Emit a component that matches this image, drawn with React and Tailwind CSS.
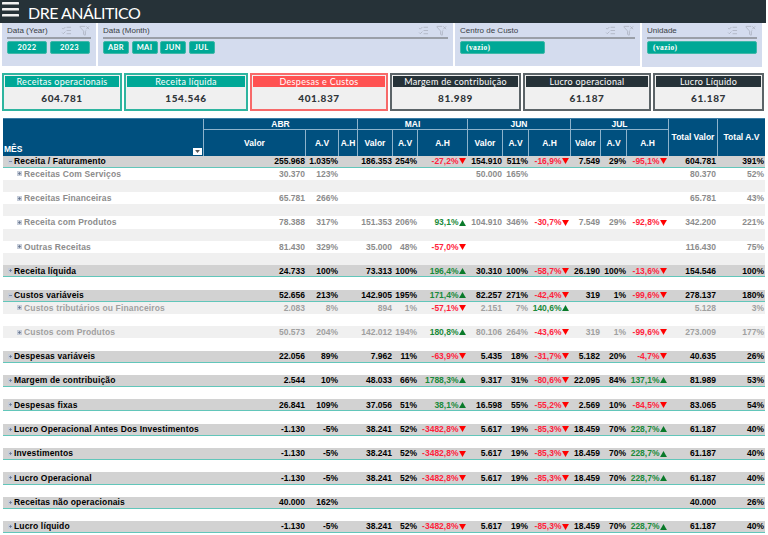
import React from 'react'
import { ListChecks, FilterX } from "lucide-react";

const grid = "grid grid-cols-[201px_102px_33px_19px_35px_25px_50px_35px_26px_42px_30px_26px_42px_49px_47px]";

// main = bold gray band with teal rule, sub = gray text detail row
const rows = [
  { label: "Receita / Faturamento", kind: "main", open: true, v: ["255.968", "1.035%", "", "186.353", "254%", "-27,2%", "154.910", "511%", "-16,9%", "7.549", "29%", "-95,1%", "604.781", "391%"] },
  { label: "Receitas Com Serviços", kind: "sub", v: ["30.370", "123%", "", "", "", "", "50.000", "165%", "", "", "", "", "80.370", "52%"] },
  { kind: "band" },
  { label: "Receitas Financeiras", kind: "sub", v: ["65.781", "266%", "", "", "", "", "", "", "", "", "", "", "65.781", "43%"] },
  { kind: "band" },
  { label: "Receita com Produtos", kind: "sub", v: ["78.388", "317%", "", "151.353", "206%", "93,1%", "104.910", "346%", "-30,7%", "7.549", "29%", "-92,8%", "342.200", "221%"] },
  { kind: "band" },
  { label: "Outras Receitas", kind: "sub", v: ["81.430", "329%", "", "35.000", "48%", "-57,0%", "", "", "", "", "", "", "116.430", "75%"] },
  { kind: "band" },
  { label: "Receita líquida", kind: "main", v: ["24.733", "100%", "", "73.313", "100%", "196,4%", "30.310", "100%", "-58,7%", "26.190", "100%", "-13,6%", "154.546", "100%"] },
  { kind: "blank" },
  { label: "Custos variáveis", kind: "main", open: true, v: ["52.656", "213%", "", "142.905", "195%", "171,4%", "82.257", "271%", "-42,4%", "319", "1%", "-99,6%", "278.137", "180%"] },
  { label: "Custos tributários ou Financeiros", kind: "subgray", v: ["2.083", "8%", "", "894", "1%", "-57,1%", "2.151", "7%", "140,6%", "", "", "", "5.128", "3%"] },
  { kind: "blank" },
  { label: "Custos com Produtos", kind: "subgray", v: ["50.573", "204%", "", "142.012", "194%", "180,8%", "80.106", "264%", "-43,6%", "319", "1%", "-99,6%", "273.009", "177%"] },
  { kind: "blank" },
  { label: "Despesas variáveis", kind: "main", v: ["22.056", "89%", "", "7.962", "11%", "-63,9%", "5.435", "18%", "-31,7%", "5.182", "20%", "-4,7%", "40.635", "26%"] },
  { kind: "blank" },
  { label: "Margem de contribuição", kind: "main", v: ["2.544", "10%", "", "48.033", "66%", "1788,3%", "9.317", "31%", "-80,6%", "22.095", "84%", "137,1%", "81.989", "53%"] },
  { kind: "blank" },
  { label: "Despesas fixas", kind: "main", v: ["26.841", "109%", "", "37.056", "51%", "38,1%", "16.598", "55%", "-55,2%", "2.569", "10%", "-84,5%", "83.065", "54%"] },
  { kind: "blank" },
  { label: "Lucro Operacional Antes Dos Investimentos", kind: "main", v: ["-1.130", "-5%", "", "38.241", "52%", "-3482,8%", "5.617", "19%", "-85,3%", "18.459", "70%", "228,7%", "61.187", "40%"] },
  { kind: "blank" },
  { label: "Investimentos", kind: "main", v: ["-1.130", "-5%", "", "38.241", "52%", "-3482,8%", "5.617", "19%", "-85,3%", "18.459", "70%", "228,7%", "61.187", "40%"] },
  { kind: "blank" },
  { label: "Lucro Operacional", kind: "main", v: ["-1.130", "-5%", "", "38.241", "52%", "-3482,8%", "5.617", "19%", "-85,3%", "18.459", "70%", "228,7%", "61.187", "40%"] },
  { kind: "blank" },
  { label: "Receitas não operacionais", kind: "main", v: ["40.000", "162%", "", "", "", "", "", "", "", "", "", "", "40.000", "26%"] },
  { kind: "blank" },
  { label: "Lucro líquido", kind: "main", v: ["-1.130", "-5%", "", "38.241", "52%", "-3482,8%", "5.617", "19%", "-85,3%", "18.459", "70%", "228,7%", "61.187", "40%"] },
];

const cards = [
  { title: "Receitas operacionais", value: "604.781", w: "w-[120px]", box: "border-[#2fb5a0]", head: "bg-[#00a896]" },
  { title: "Receita líquida", value: "154.546", w: "w-[124px]", box: "border-[#2fb5a0]", head: "bg-[#00a896]" },
  { title: "Despesas e Custos", value: "401.837", w: "w-[138px]", box: "border-[#f76a6a]", head: "bg-[#ff5252]" },
  { title: "Margem de contribuição", value: "81.989", w: "w-[131px]", box: "border-[#5c6468]", head: "bg-[#263238]" },
  { title: "Lucro operacional", value: "61.187", w: "w-[128px]", box: "border-[#5c6468]", head: "bg-[#263238]" },
  { title: "Lucro Líquido", value: "61.187", w: "w-[111px]", box: "border-[#5c6468]", head: "bg-[#263238]" },
];

function Slicer({ title, className, children }) {
  return (
    <div className={"bg-[#d4dcee] px-[5px] pt-[2px] " + className}>
      <div className="flex items-center justify-between border-b-2 border-[#9a9fa8] pb-[1px] h-[14px] text-[8px] text-[#3a3f47]">
        <span>{title}</span>
        <span className="flex items-center gap-[7px] mr-[1px] text-[#a4abb8]">
          <ListChecks className="w-[11px] h-[11px]" strokeWidth={1.5} />
          <FilterX className="w-[11px] h-[11px]" strokeWidth={1.5} />
        </span>
      </div>
      <div className="flex gap-[2.5px] mt-[2px]">{children}</div>
    </div>
  );
}

function Chip({ children, className }) {
  return (
    <div className={"h-[13px] bg-[#00a896] rounded-[2px] border border-[#3fb8a8] text-white text-[7.5px] font-bold flex items-center justify-center font-['Lato',sans-serif] tracking-[0.4px] " + className}>
      {children}
    </div>
  );
}

function Ah({ value }) {
  const down = value.startsWith("-");
  return (
    <span className={"flex items-center justify-end pr-[2px] gap-[0.5px] font-bold " + (down ? "text-[#ff1f3d]" : "text-[#1a8a3a]")}>
      {value}
      <svg viewBox="0 0 8 7" className="w-[7px] h-[6px] shrink-0">
        <path d={down ? "M0 0H8L4 7Z" : "M4 0L8 7H0Z"} fill={down ? "#ff0000" : "#0a7a2a"} />
      </svg>
    </span>
  );
}

function ExpandBox({ open }) {
  return (
    <svg viewBox="0 0 5 5" className="w-[5px] h-[5px] shrink-0">
      <rect x="0" y="0" width="5" height="5" fill="#c6cdd9" />
      <path d="M1 2.5H4" stroke="#5f6f8a" strokeWidth="0.7" />
      {!open && <path d="M2.5 1V4" stroke="#5f6f8a" strokeWidth="0.7" />}
    </svg>
  );
}

function Row({ r }) {
  if (r.kind === "band") return <div className="h-[12.2px] bg-[#f0f0f0]" />;
  if (r.kind === "blank") return <div className="h-[12.2px] bg-white" />;
  const main = r.kind === "main";
  const style = main
    ? "bg-[#d2d2d2] border-b border-[#62c6ba] text-black font-bold"
    : r.kind === "subgray"
      ? "bg-[#f0f0f0] text-[#a0a0a0] font-bold"
      : "bg-white text-[#8c8c8c] font-bold";
  return (
    <div className={grid + " h-[12.2px] items-center text-[8.5px] leading-none " + style}>
      <div className={"flex items-center " + (main ? "pl-[5px] gap-[1px]" : "pl-[14px] gap-[2px]")}>
        <ExpandBox open={r.open} />
        <span className="tracking-[0.15px] whitespace-nowrap">{r.label}</span>
      </div>
      {r.v.map((c, i) => {
        const isAh = i === 2 || i === 5 || i === 8 || i === 11;
        if (isAh) return <div key={i}>{c && <Ah value={c} />}</div>;
        return (
          <div key={i} className={"text-right whitespace-nowrap " + (i === 12 ? "pr-[2px]" : "pr-[1px]")}>
            {c}
          </div>
        );
      })}
    </div>
  );
}

export default function App() {
  return (
    <div className="w-[768px] h-[535px] overflow-hidden bg-white font-['Liberation_Sans',Arial,sans-serif]">
      {/* Top bar */}
      <div className="w-[766px] h-[23px] bg-[#263238] flex items-end text-white">
        <svg viewBox="0 0 17 15" className="w-[17px] h-[15px] ml-[2px] self-start mt-[2px] shrink-0" fill="#f2f2f2">
          <rect x="0" y="0" width="17" height="2.6" rx="0.6" />
          <rect x="0" y="6" width="17" height="2.6" rx="0.6" />
          <rect x="0" y="12" width="17" height="2.6" rx="0.6" />
        </svg>
        <span className="ml-[9px] text-[16px] leading-[20px] tracking-[-0.5px] font-['Lato',sans-serif]">DRE ANÁLITICO</span>
      </div>

      {/* Slicers */}
      <div className="flex items-start pl-[2px] gap-[2px] h-[44px]">
        <Slicer title="Data (Year)" className="w-[94px] h-[43px]">
          <Chip className="w-[40px]">2022</Chip>
          <Chip className="w-[40px]">2023</Chip>
        </Slicer>
        <Slicer title="Data (Month)" className="w-[355px] h-[43px]">
          <Chip className="w-[26px]">ABR</Chip>
          <Chip className="w-[26px]">MAI</Chip>
          <Chip className="w-[26px]">JUN</Chip>
          <Chip className="w-[26px]">JUL</Chip>
        </Slicer>
        <Slicer title="Centro de Custo" className="w-[185px] h-[43px]">
          <Chip className="w-[85px] !justify-start pl-[5px] font-['Liberation_Serif',serif]">(vazio)</Chip>
        </Slicer>
        <Slicer title="Unidade" className="w-[120px] h-[44px]">
          <Chip className="w-[110px] !justify-start pl-[5px] font-['Liberation_Serif',serif]">(vazio)</Chip>
        </Slicer>
      </div>

      {/* KPI cards */}
      <div className="flex pl-[2px] gap-[2px] mt-[6px] h-[38px] font-['Lato',sans-serif]">
        {cards.map((c) => (
          <div key={c.title} className={"bg-[#f0f0f0] border-2 flex flex-col " + c.w + " " + c.box}>
            <div className={"h-[11px] mx-[1px] mt-[1px] text-white text-[9px] leading-[11px] text-center tracking-[0.3px] whitespace-nowrap " + c.head}>
              {c.title}
            </div>
            <div className="flex-1 flex items-center justify-center text-[10px] font-black text-[#30363a] tracking-[0.6px]">
              {c.value}
            </div>
          </div>
        ))}
      </div>

      {/* Table */}
      <div className="ml-[3px] mt-[7px] w-[762px]">
        <div className="bg-[#00507f] text-white font-bold text-[8.5px] h-[37.5px] border-t border-[#3a7ca5]">
          <div className={grid + " h-[36.5px] text-center"}>
            <div className="row-span-2 border-r border-[#8db3cc] flex items-end justify-between pl-[1px]">
              <span>MÊS</span>
              <span className="w-[9px] h-[7px] mr-[1px] mb-[1px] bg-white flex items-center justify-center">
                <svg viewBox="0 0 8 5" className="w-[5px] h-[3px]"><path d="M0 0H8L4 5Z" fill="#555" /></svg>
              </span>
            </div>
            <div className="col-span-3 h-[11px] leading-[11px] border-r border-b border-[#8db3cc]">ABR</div>
            <div className="col-span-3 h-[11px] leading-[11px] border-r border-b border-[#8db3cc]">MAI</div>
            <div className="col-span-3 h-[11px] leading-[11px] border-r border-b border-[#8db3cc]">JUN</div>
            <div className="col-span-3 h-[11px] leading-[11px] border-r border-b border-[#8db3cc]">JUL</div>
            <div className="row-span-2 border-r border-[#8db3cc] leading-[36px] whitespace-nowrap">Total Valor</div>
            <div className="row-span-2 leading-[36px] whitespace-nowrap">Total A.V</div>
            {["Valor", "A.V", "A.H", "Valor", "A.V", "A.H", "Valor", "A.V", "A.H", "Valor", "A.V", "A.H"].map((h, i) => (
              <div key={i} className="border-r border-[#8db3cc] h-[25.5px] leading-[26px]">{h}</div>
            ))}
          </div>
        </div>
        {rows.map((r, i) => (
          <Row key={i} r={r} />
        ))}
      </div>
    </div>
  );
}
